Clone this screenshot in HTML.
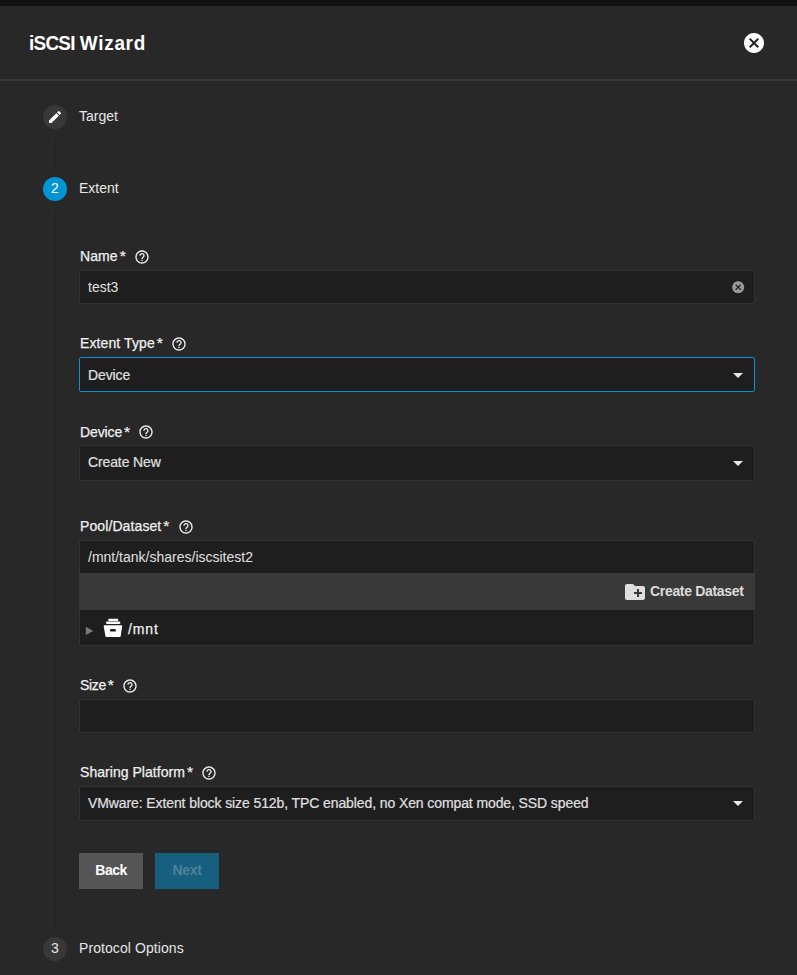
<!DOCTYPE html>
<html lang="en">
<head>
<meta charset="utf-8">
<title>iSCSI Wizard</title>
<style>
*{box-sizing:border-box;margin:0;padding:0}
html,body{width:797px;height:975px;overflow:hidden;background:#282828;color:#e6e6e6;
  font-family:"Liberation Sans",sans-serif;font-size:14px;line-height:1}
.abs{position:absolute}
#topbar{position:absolute;left:0;top:0;width:797px;height:6px;background:#111111}
#title{position:absolute;left:29px;top:30px;transform:scaleX(0.9);font-size:21px;font-weight:bold;color:#fff;line-height:26px;white-space:nowrap;transform-origin:0 50%}
#hdrline{position:absolute;left:0;top:79px;width:797px;height:2px;background:#363636}
#close{position:absolute;left:744px;top:33px;width:20px;height:20px}
.vline{position:absolute;left:55px;width:1px;background:#222222}
.step{position:absolute;left:43px;width:24px;height:24px;border-radius:50%;background:#383838;color:#e6e6e6;
  text-align:center;line-height:22px;font-size:14px}
.step.active{background:#0095d5;color:#fff}
.steplabel{position:absolute;left:79px;font-size:14px;line-height:16px;color:#e6e6e6;white-space:nowrap;transform-origin:0 50%}
.lbl{position:absolute;left:80px;letter-spacing:0.1px;-webkit-text-stroke:0.25px #f0f0f0;font-size:14px;line-height:16px;color:#f0f0f0;white-space:nowrap;transform-origin:0 50%}
.ast{font-size:15.5px;line-height:0;margin-left:2px;position:relative;top:-0.4px}
.help{position:absolute;width:14px;height:14px}
.box{position:absolute;left:79px;width:676px;background:#1e1e1e;border:1px solid #333;border-radius:2px}
.box.focus{border:1px solid #0a93d2;border-radius:2px}
.val{position:absolute;left:88px;font-size:14px;line-height:16px;color:#e0e0e0;white-space:nowrap;transform-origin:0 50%}
.arrow{position:absolute;left:733px;width:0;height:0;border-left:5px solid transparent;border-right:5px solid transparent;border-top:5px solid #e8e8e8}
.btn{position:absolute;top:853px;width:64px;height:36px;font-size:14px;font-weight:bold;text-align:center;line-height:34px}
</style>
</head>
<body>
<svg width="0" height="0" style="position:absolute"><defs>
<path id="i-help" d="M11 18h2v-2h-2v2zm1-16C6.48 2 2 6.48 2 12s4.48 10 10 10 10-4.48 10-10S17.52 2 12 2zm0 18c-4.41 0-8-3.590-8-8s3.590-8 8-8 8 3.590 8 8-3.590 8-8 8zm0-14c-2.210 0-4 1.790-4 4h2c0-1.100.9-2 2-2s2 .9 2 2c0 2-3 1.750-3 5h2c0-2.250 3-2.500 3-5 0-2.210-1.790-4-4-4z"/>
<path id="i-cancel" d="M12 2C6.470 2 2 6.470 2 12s4.470 10 10 10 10-4.470 10-10S17.530 2 12 2zm5 13.590L15.590 17 12 13.410 8.410 17 7 15.590 10.590 12 7 8.410 8.410 7 12 10.590 15.590 7 17 8.410 13.410 12 17 15.590z"/>
<path id="i-folder" d="M20 6h-8l-2-2H4c-1.110 0-1.990.890-1.990 2L2 18c0 1.110.890 2 2 2h16c1.110 0 2-.890 2-2V8c0-1.110-.890-2-2-2zm-1 8h-3v3h-2v-3h-3v-2h3V9h2v3h3v2z"/>
</defs></svg>
<div id="topbar"></div>
<div id="title"><span style="letter-spacing:-0.8px">iSCSI</span><span style="letter-spacing:0.8px;word-spacing:-1.0px"> Wizard</span></div>
<svg id="close" style="left:742px;top:31px;width:24px;height:24px" viewBox="0 0 24 24"><use href="#i-cancel" fill="#fff"/></svg>
<div id="hdrline"></div>

<div class="vline" style="top:137px;height:32px"></div>
<div class="vline" style="top:209px;height:720px"></div>

<div class="step" style="top:105px"><svg width="24" height="24" viewBox="0 0 24 24"><g transform="translate(4 4) scale(0.6667)"><path fill="#fff" d="M3 17.25V21h3.750L17.81 9.94l-3.750-3.750L3 17.25zM20.71 7.040a1 1 0 0 0 0-1.410l-2.340-2.340a1 1 0 0 0-1.410 0l-1.830 1.830 3.750 3.750 1.830-1.830z"/></g></svg></div>
<div class="steplabel" style="top:108px">Target</div>
<div class="step active" style="top:177px">2</div>
<div class="steplabel" style="top:180px">Extent</div>
<div class="step" style="top:937px">3</div>
<div class="steplabel" style="top:940px;letter-spacing:0.08px">Protocol Options</div>

<!-- Name -->
<div class="lbl" style="top:248px">Name<span class="ast">*</span></div>
<svg class="help" style="left:134.2px;top:249.0px;width:16px;height:16px" viewBox="0 0 24 24"><use href="#i-help" fill="#f0f0f0"/></svg>
<div class="box" style="top:270px;height:34px"></div>
<div class="val" style="top:279px">test3</div>
<svg class="abs" style="left:730.8px;top:279.8px;width:14.4px;height:14.4px" viewBox="0 0 24 24"><use href="#i-cancel" fill="#9a9a9a"/></svg>

<!-- Extent Type -->
<div class="lbl" style="top:335px">Extent Type<span class="ast">*</span></div>
<svg class="help" style="left:171.0px;top:335.8px;width:16px;height:16px" viewBox="0 0 24 24"><use href="#i-help" fill="#f0f0f0"/></svg>
<div class="box focus" style="top:357px;height:35px"></div>
<div class="val" style="top:367px;-webkit-text-stroke:0.2px #e0e0e0;letter-spacing:-0.1px">Device</div>
<div class="arrow" style="top:373px"></div>

<!-- Device -->
<div class="lbl" style="top:424px;letter-spacing:-0.12px">Device<span class="ast">*</span></div>
<svg class="help" style="left:137.9px;top:423.6px;width:16px;height:16px" viewBox="0 0 24 24"><use href="#i-help" fill="#f0f0f0"/></svg>
<div class="box" style="top:445px;height:36px"></div>
<div class="val" style="top:454px;letter-spacing:-0.12px;-webkit-text-stroke:0.2px #e0e0e0">Create New</div>
<div class="arrow" style="top:461px"></div>

<!-- Pool/Dataset -->
<div class="lbl" style="top:518px">Pool/Dataset<span class="ast">*</span></div>
<svg class="help" style="left:178.0px;top:519.0px;width:16px;height:16px" viewBox="0 0 24 24"><use href="#i-help" fill="#f0f0f0"/></svg>
<div class="box" style="top:540px;height:106px"></div>
<div class="abs" style="left:79px;top:573px;width:676px;height:37px;background:#393939"></div>
<div class="val" style="top:549px">/mnt/tank/shares/iscsitest2</div>
<svg class="abs" style="left:623px;top:580px;width:24px;height:24px" viewBox="0 0 24 24"><use href="#i-folder" fill="#dedede"/></svg>
<div class="val" id="cd" style="letter-spacing:-0.32px;left:650px;top:583px;font-weight:bold;color:#dcdcdc">Create Dataset</div>
<svg class="abs" style="left:85px;top:626px;width:10px;height:10px" viewBox="0 0 10 10"><path d="M0.8 0.8 L8.3 4.9 L0.8 9 Z" fill="#7a7a7a"/></svg>
<svg class="abs" style="left:102px;top:617px;width:22px;height:22px" viewBox="0 0 22 22">
<rect x="6.1" y="1.7" width="10.3" height="2.2" rx="1.1" fill="#fff"/>
<rect x="3.9" y="4.6" width="14.5" height="2.3" rx="1.15" fill="#fff"/>
<path d="M2.6 8.2 H19.3 Q20.3 8.2 20.2 9.2 L18.7 18.9 Q18.5 20.1 17.3 20.1 H4.8 Q3.6 20.1 3.4 18.9 L1.7 9.2 Q1.6 8.2 2.6 8.2 Z" fill="#fff"/>
<rect x="8" y="12.1" width="5.9" height="2.5" rx="1.2" fill="#1e1e1e"/>
</svg>
<div class="val" id="mnt" style="letter-spacing:0.9px;left:128px;top:621px;color:#f0f0f0;-webkit-text-stroke:0.25px #f0f0f0">/mnt</div>

<!-- Size -->
<div class="lbl" style="top:677px;letter-spacing:-0.35px">Size<span class="ast">*</span></div>
<svg class="help" style="left:122.2px;top:678.3px;width:16px;height:16px" viewBox="0 0 24 24"><use href="#i-help" fill="#f0f0f0"/></svg>
<div class="box" style="top:699px;height:34px"></div>

<!-- Sharing Platform -->
<div class="lbl" style="top:764px;letter-spacing:0.04px">Sharing Platform<span class="ast">*</span></div>
<svg class="help" style="left:200.8px;top:765.4px;width:16px;height:16px" viewBox="0 0 24 24"><use href="#i-help" fill="#f0f0f0"/></svg>
<div class="box" style="top:786px;height:35px"></div>
<div class="val" id="vm" style="letter-spacing:-0.1px;-webkit-text-stroke:0.2px #e0e0e0;top:795px">VMware: Extent block size 512b, TPC enabled, no Xen compat mode, SSD speed</div>
<div class="arrow" style="top:801px"></div>

<div class="btn" style="left:79px;background:#555;color:#fff;letter-spacing:-0.55px">Back</div>
<div class="btn" style="left:155px;background:#175f7f;color:#4d8298;letter-spacing:-0.3px">Next</div>
</body>
</html>
